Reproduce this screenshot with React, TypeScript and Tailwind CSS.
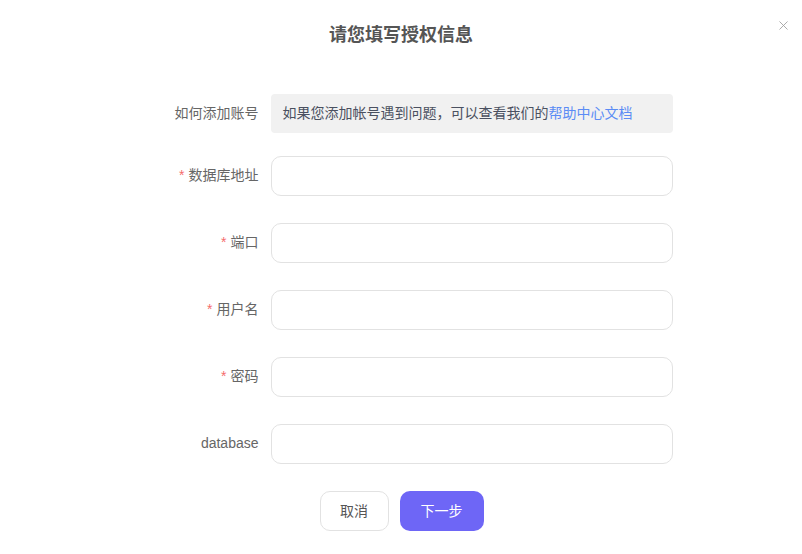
import { X } from "lucide-react";

const fields = [
  { label: "数据库地址", required: true },
  { label: "端口", required: true },
  { label: "用户名", required: true },
  { label: "密码", required: true },
  { label: "database", required: false },
];

export default function App() {
  return (
    <div
      className="relative w-[802px] h-[554px] bg-white"
      style={{ fontFamily: '"Liberation Sans", "Noto Sans CJK SC", sans-serif' }}
    >
      {/* 关闭按钮 */}
      <button className="absolute right-[11px] top-[18px] text-[#a0a0a0]">
        <X size={15} strokeWidth={1.4} />
      </button>

      <h2 className="pt-[22px] text-center text-[18px] leading-[26px] font-bold text-[#555]">
        请您填写授权信息
      </h2>

      <div className="mt-[46px] flex flex-col items-center pl-[1px]">
        <div className="grid grid-cols-[128px_402px] gap-x-[12px] items-center">
          <div className="text-right text-[14px] text-[#666]">如何添加账号</div>
          <div className="h-[39px] rounded-[4px] bg-[#f1f1f1] px-[12px] flex items-center text-[14px] text-[#4a5060]">
            如果您添加帐号遇到问题，可以查看我们的
            <a className="text-[#5b8cf5] cursor-pointer">帮助中心文档</a>
          </div>
        </div>

        <div className="mt-[23px] flex flex-col gap-[27px]">
          {fields.map((f) => (
            <div
              key={f.label}
              className="grid grid-cols-[128px_402px] gap-x-[12px] items-center"
            >
              <label className="text-right text-[14px] text-[#666] -mt-[1px]">
                {f.required && <span className="text-[#f56c6c] mr-[4px]">*</span>}
                {f.label}
              </label>
              <input className="h-[40px] rounded-[10px] border border-[#e2e2e2] px-[12px] text-[14px] outline-none" />
            </div>
          ))}
        </div>

        <div className="mt-[27px] flex gap-[11px]">
          <button className="w-[69px] h-[40px] rounded-[10px] border border-[#e2e2e2] bg-white text-[14px] text-[#555]">
            取消
          </button>
          <button className="w-[84px] h-[40px] rounded-[10px] bg-[#6e66f6] text-[14px] text-white">
            下一步
          </button>
        </div>
      </div>
    </div>
  );
}
